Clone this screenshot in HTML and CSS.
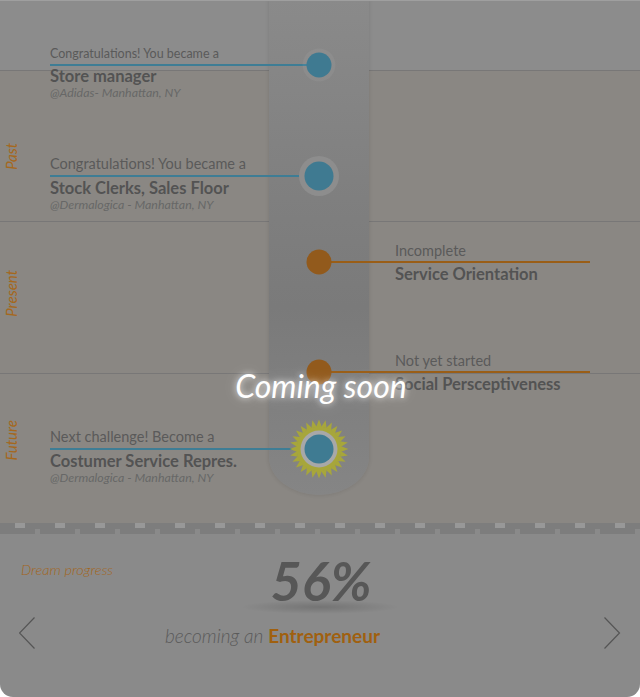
FILE: index.html
```html
<!DOCTYPE html>
<html>
<head>
<meta charset="utf-8">
<link rel="stylesheet" href="styles.css">
</head>
<body>
<div class="card">
  <div class="timeline">
    <div class="head"></div>
    <section class="band band-past"><span class="band-label">Past</span></section>
    <section class="band band-present"><span class="band-label">Present</span></section>
    <section class="band band-future"><span class="band-label">Future</span></section>
    <div class="spine"></div>
    <div class="entries">
      <div class="entry left small e1">
        <p class="cap">Congratulations! You became a</p>
        <div class="rail teal"><span class="node teal soft"></span></div>
        <p class="title">Store manager</p>
        <p class="sub">@Adidas- Manhattan, NY</p>
      </div>
      <div class="entry left large e2">
        <p class="cap">Congratulations! You became a</p>
        <div class="rail teal"><span class="node teal big"></span></div>
        <p class="title">Stock Clerks, Sales Floor</p>
        <p class="sub">@Dermalogica - Manhattan, NY</p>
      </div>
      <div class="entry right e3">
        <p class="cap">Incomplete</p>
        <div class="rail amber"><span class="node amber"></span></div>
        <p class="title">Service Orientation</p>
      </div>
      <div class="entry right e4">
        <p class="cap">Not yet started</p>
        <div class="rail amber"><span class="node amber"></span></div>
        <p class="title">Social Persceptiveness</p>
      </div>
      <div class="entry left e5">
        <p class="cap">Next challenge! Become a</p>
        <div class="rail teal">
          <svg class="node sun" width="60" height="60" viewBox="0 0 60 60">
            <defs>
              <path id="spike" d="M30 0.5 L32.8 8 L27.2 8Z"/>
              <g id="spikes">
                <use href="#spike"/>
                <use href="#spike" transform="rotate(12.857 30 30)"/>
                <use href="#spike" transform="rotate(25.714 30 30)"/>
                <use href="#spike" transform="rotate(38.571 30 30)"/>
                <use href="#spike" transform="rotate(51.429 30 30)"/>
                <use href="#spike" transform="rotate(64.286 30 30)"/>
                <use href="#spike" transform="rotate(77.143 30 30)"/>
              </g>
            </defs>
            <g fill="#a7a63b">
              <use href="#spikes"/>
              <use href="#spikes" transform="rotate(90 30 30)"/>
              <use href="#spikes" transform="rotate(180 30 30)"/>
              <use href="#spikes" transform="rotate(270 30 30)"/>
              <circle cx="30" cy="30" r="22.5"/>
            </g>
            <circle cx="30" cy="30" r="18.5" fill="#a8a8a8"/>
            <circle cx="30" cy="30" r="14.5" fill="#3f7b92"/>
          </svg>
        </div>
        <p class="title">Costumer Service Repres.</p>
        <p class="sub">@Dermalogica - Manhattan, NY</p>
      </div>
    </div>
  </div>
  <div class="stitch"></div>
  <div class="progress">
    <div class="side side-left">
      <p class="dream">Dream progress</p>
      <svg class="arrow" width="17" height="33" viewBox="0 0 17 33"><polyline points="15.5,0.5 0.5,16 15.5,31.5" fill="none" stroke="#555" stroke-width="1.2"/></svg>
    </div>
    <div class="center">
      <p class="pct">56%</p>
      <p class="becoming"><span class="light">becoming an</span> <span class="goal">Entrepreneur</span></p>
    </div>
    <div class="side side-right">
      <svg class="arrow" width="17" height="33" viewBox="0 0 17 33"><polyline points="0.5,0.5 15.5,16 0.5,31.5" fill="none" stroke="#555" stroke-width="1.2"/></svg>
    </div>
  </div>
  <div class="overlay"><span>Coming soon</span></div>
</div>
</body>
</html>
```

FILE: styles.css
```css
* { box-sizing: border-box; }
body {
  margin: 0;
  background: #fff;
  font-family: Lato, "Open Sans", "DejaVu Sans", sans-serif;
}
p { margin: 0; }

.card {
  position: relative;
  width: 640px;
  height: 697px;
  overflow: hidden;
  background: #8a8a8a;
  border-radius: 0 0 13px 13px;
}
.card::before {
  content: "";
  position: absolute;
  left: 0; right: 0; top: 0;
  height: 1px;
  background: #9f9f9f;
  z-index: 5;
}

.timeline {
  position: relative;
  height: 523px;
  background: #8c8c8c;
}
.head { height: 70px; }

.band {
  display: flex;
  align-items: flex-start;
  background: #8a8783;
  border-top: 1px solid #787777;
  padding-left: 4px;
}
.band-past { height: 151px; padding-top: 72px; }
.band-present { height: 152px; padding-top: 48px; }
.band-future { height: 150px; padding-top: 46px; }

.band-label {
  writing-mode: vertical-rl;
  transform: rotate(180deg);
  font-style: italic;
  font-weight: 400;
  font-size: 15px;
  line-height: 14px;
  color: #a5681d;
}

.spine {
  position: absolute;
  left: 269px;
  top: 0;
  width: 100px;
  height: 495px;
  border-radius: 0 0 50px 50px / 0 0 38px 38px;
  background: linear-gradient(#8a8a8a, #7f7f7f 40%, #7a7a7a 62%, #858585);
  box-shadow: 0 0 4px rgba(0, 0, 0, 0.12);
}

.entries {
  position: absolute;
  inset: 0;
  display: flex;
  flex-direction: column;
  align-items: flex-start;
}
.entry.left { margin-left: 50px; width: 269px; }
.entry.right { margin-left: 319px; width: 271px; }
.entry.right .cap,
.entry.right .title { padding-left: 76px; }

.e1 { margin-top: 46px; }
.e2 { margin-top: 55px; }
.e3 { margin-top: 30px; }
.e4 { margin-top: 68px; }
.e5 { margin-top: 35px; }

.cap {
  font-size: 14.5px;
  line-height: 16px;
  color: #5a5a5a;
  margin-bottom: 3px;
  white-space: nowrap;
}
.right .cap { padding-top: 1px; margin-bottom: 2px; }
.small .cap { font-size: 12.5px; margin-bottom: 2px; }
.large .cap { line-height: 18px; margin-bottom: 2px; }

.title {
  font-size: 16.5px;
  line-height: 20px;
  font-weight: 700;
  color: #535353;
  margin-top: 1px;
  white-space: nowrap;
}
.small .title { margin-top: 0; }

.sub {
  font-size: 12.4px;
  line-height: 14px;
  font-style: italic;
  font-weight: 400;
  color: #676767;
  white-space: nowrap;
}

.rail { position: relative; height: 2px; }
.rail.teal { background: #3e7d95; }
.rail.amber { background: #9a5e17; }

.node {
  position: absolute;
  top: 50%;
  width: 25px;
  height: 25px;
  border-radius: 50%;
  transform: translate(-50%, -50%);
}
.left .node { left: 100%; }
.right .node { left: 0; }
.node.teal { background: #3f7a91; }
.node.amber { background: #925a1c; }
.node.soft { box-shadow: 0 0 0 4px rgba(255, 255, 255, 0.05); }
.node.big { width: 29px; height: 29px; box-shadow: 0 0 0 5.5px #8d8d8d; }
.node.sun { width: 60px; height: 60px; border-radius: 0; }

.stitch {
  height: 11px;
  background:
    linear-gradient(to right, transparent 15px, #989898 15px, #989898 25px, transparent 25px) 0 0 / 40px 5px repeat-x,
    linear-gradient(to right, transparent 35px, #8a8a8a 35px, #8a8a8a 45px, transparent 45px) 0 100% / 40px 5px repeat-x,
    #7d7d7d;
}

.progress {
  position: relative;
  z-index: 0;
  display: flex;
  height: 163px;
  padding-top: 22px;
}
.side { width: 149px; display: flex; flex-direction: column; }
.side-left { padding-left: 19px; }
.side-right { padding-right: 19px; align-items: flex-end; }
.dream {
  margin-top: 6px;
  margin-left: 2px;
  font-size: 14.5px;
  line-height: 16px;
  font-style: italic;
  font-weight: 300;
  color: #a3651b;
  white-space: nowrap;
}
.side-left .arrow { margin-top: 39px; }
.side-right .arrow { margin-top: 61px; }

.center { flex: 1; }
.pct {
  position: relative;
  text-align: center;
  padding-left: 2px;
  font-size: 54px;
  line-height: 50px;
  font-weight: 700;
  font-style: italic;
  color: #575757;
}
.pct::after {
  content: "";
  position: absolute;
  left: 50%;
  bottom: -8px;
  width: 160px;
  height: 14px;
  margin-left: -80px;
  background: radial-gradient(ellipse at center, rgba(0, 0, 0, 0.16), rgba(0, 0, 0, 0) 70%);
  z-index: -1;
}
.becoming {
  margin-top: 19px;
  padding-left: 16px;
  font-size: 19px;
  line-height: 22px;
  white-space: nowrap;
}
.light { font-style: italic; font-weight: 300; color: #5a5a5a; }
.goal { font-weight: 700; color: #a0600f; }

.overlay {
  position: absolute;
  left: 0; right: 0;
  top: 368px;
  text-align: center;
  padding-left: 2px;
  font-size: 32px;
  line-height: 36px;
  font-style: italic;
  color: #fff;
  text-shadow: 0 0 6px rgba(255, 255, 255, 0.75), 0 0 16px rgba(255, 255, 255, 0.35);
}
```
